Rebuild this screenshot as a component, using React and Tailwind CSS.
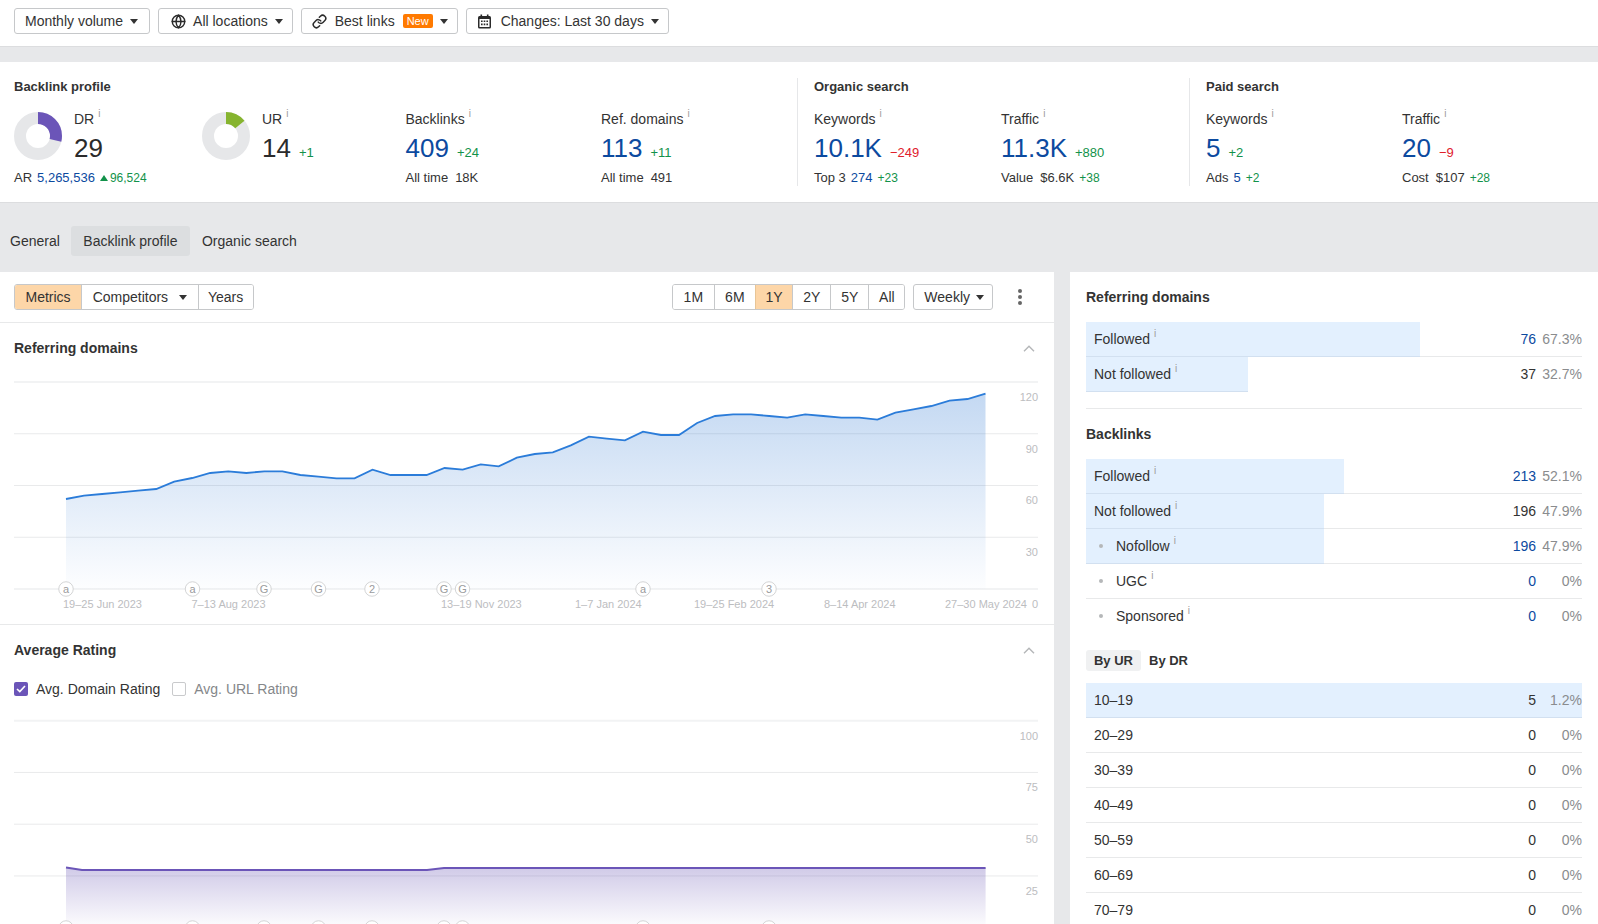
import { Globe, Link } from 'lucide-react';

const refY = [687, 677, 672, 667, 662, 657, 635, 624, 609, 604, 609, 604, 604, 615, 620, 625, 625, 599, 615, 615, 615, 594, 599, 583, 589, 563, 552, 547, 526, 500, 506, 511, 485, 495, 495, 459, 438, 433, 433, 438, 443, 433, 438, 443, 443, 449, 428, 418, 408, 392, 387, 371];
const refPoints = refY.map((z, i) => [66 + i * 18.03, 270 + z / 3]);
const toLine = (pts) => pts.map(([x, y]) => `${x.toFixed(1)},${y.toFixed(1)}`).join(' ');

const events = [
  [66, 'a'],
  [192.5, 'a'],
  [264, 'G'],
  [318.5, 'G'],
  [372, '2'],
  [444, 'G'],
  [462.5, 'G'],
  [643, 'a'],
  [769, '3'],
];

const xLabels = [
  [63, '19–25 Jun 2023'],
  [191.5, '7–13 Aug 2023'],
  [441, '13–19 Nov 2023'],
  [575, '1–7 Jan 2024'],
  [694, '19–25 Feb 2024'],
  [824, '8–14 Apr 2024'],
  [945, '27–30 May 2024'],
];

function Caret({ className = '' }) {
  return (
    <svg width="8" height="5" viewBox="0 0 8 5" className={`shrink-0 ${className}`}>
      <path d="M0 0h8L4 5z" fill="#333" />
    </svg>
  );
}

function Info() {
  return <span className="relative -top-[5px] ml-[4px] text-[10px] leading-none text-[#9c9c9c]">i</span>;
}

function TopButton({ icon, className = '', children }) {
  return (
    <button type="button" className={`flex h-[26px] items-center rounded-[3px] border border-[#c6c8ca] bg-white text-sm text-[#333] ${className}`}>
      {icon}
      <span>{children}</span>
      <Caret className="ml-[7px]" />
    </button>
  );
}

function CalendarIcon() {
  return (
    <svg width="15" height="15" viewBox="0 0 15 15" className="mr-[9px] shrink-0">
      <rect x="1" y="2" width="13" height="12.5" rx="1.5" fill="#2b2b2b" />
      <rect x="3.5" y="0.5" width="1.6" height="3" fill="#2b2b2b" />
      <rect x="9.9" y="0.5" width="1.6" height="3" fill="#2b2b2b" />
      <rect x="2.5" y="5" width="10" height="8" fill="#fff" />
      <path d="M4 6.5h1.6v1.6H4zM6.7 6.5h1.6v1.6H6.7zM9.4 6.5H11v1.6H9.4zM4 9.6h1.6v1.6H4zM6.7 9.6h1.6v1.6H6.7zM9.4 9.6H11v1.6H9.4z" fill="#2b2b2b" />
    </svg>
  );
}

function Donut({ percent, color }) {
  return (
    <svg width="48" height="48" viewBox="0 0 48 48" className="mt-[3px] shrink-0">
      <circle cx="24" cy="24" r="18" fill="none" stroke="#e6e7e9" strokeWidth="12" />
      <circle
        cx="24"
        cy="24"
        r="18"
        fill="none"
        stroke={color}
        strokeWidth="12"
        pathLength="100"
        strokeDasharray={`${percent} 100`}
        transform="rotate(-90 24 24)"
      />
    </svg>
  );
}

function Delta({ value, red, small }) {
  return <span className={`${small ? 'text-xs' : 'text-[13px]'} ${red ? 'text-[#e0202c]' : 'text-[#12924a]'}`}>{value}</span>;
}

function Metric({ label, value, delta, red, dark, className = '', children }) {
  return (
    <div className={className}>
      <div className="flex h-5 items-center text-sm text-[#333]">
        {label}
        <Info />
      </div>
      <div className="flex h-[38px] items-center gap-[8px]">
        <span className={`text-[26px] leading-none ${dark ? 'text-[#2b2b2b]' : 'text-[#0c4a9f]'}`}>{value}</span>
        {delta ? <span className="mt-[8px]"><Delta value={delta} red={red} /></span> : null}
      </div>
      <div className="mt-[1px] flex h-5 items-center gap-[5px] whitespace-nowrap text-[13px] text-[#333]">{children}</div>
    </div>
  );
}

function Blue({ children }) {
  return <span className="text-[#0c4a9f]">{children}</span>;
}

function SummaryCard() {
  return (
    <div className="flex h-[141px] border-b border-[#dcdddf] bg-white py-4">
      <section className="h-[108px] w-[797px] pl-[14px]">
        <h3 className="h-[18px] text-[13px] font-bold leading-[18px] text-[#333]">Backlink profile</h3>
        <div className="mt-[13px] flex">
          <div className="w-[188px]">
            <div className="flex">
              <Donut percent={29} color="#6b55b8" />
              <Metric label="DR" value="29" dark className="ml-[12px]" />
            </div>
            <div className="-mt-[20px] flex h-5 items-center gap-[5px] text-[13px] text-[#333]">
              AR <Blue>5,265,536</Blue>
              <span className="flex items-center gap-[2px] text-xs text-[#12924a]">
                <svg width="8" height="6" viewBox="0 0 8 6"><path d="M4 0l4 6H0z" fill="#12924a" /></svg>
                96,524
              </span>
            </div>
          </div>
          <div className="flex w-[203.5px]">
            <Donut percent={14} color="#86b42f" />
            <Metric label="UR" value="14" delta="+1" dark className="ml-[12px]" />
          </div>
          <Metric label="Backlinks" value="409" delta="+24" className="w-[195.5px]">
            All time <span className="ml-[2px]">18K</span>
          </Metric>
          <Metric label="Ref. domains" value="113" delta="+11">
            All time <span className="ml-[2px]">491</span>
          </Metric>
        </div>
      </section>
      <section className="h-[108px] w-[392px] border-l border-[#e6e7e9] pl-4">
        <h3 className="h-[18px] text-[13px] font-bold leading-[18px] text-[#333]">Organic search</h3>
        <div className="mt-[13px] flex">
          <Metric label="Keywords" value="10.1K" delta="−249" red className="w-[187px]">
            Top 3 <Blue>274</Blue> <Delta value="+23" small />
          </Metric>
          <Metric label="Traffic" value="11.3K" delta="+880">
            Value <span className="ml-[2px]">$6.6K</span> <Delta value="+38" small />
          </Metric>
        </div>
      </section>
      <section className="h-[108px] flex-1 border-l border-[#e6e7e9] pl-4">
        <h3 className="h-[18px] text-[13px] font-bold leading-[18px] text-[#333]">Paid search</h3>
        <div className="mt-[13px] flex">
          <Metric label="Keywords" value="5" delta="+2" className="w-[196px]">
            Ads <Blue>5</Blue> <Delta value="+2" small />
          </Metric>
          <Metric label="Traffic" value="20" delta="−9" red>
            Cost <span className="ml-[2px]">$107</span> <Delta value="+28" small />
          </Metric>
        </div>
      </section>
    </div>
  );
}

function Tabs() {
  return (
    <div className="flex h-[69px] items-start pl-[10px] pt-[23px] text-sm text-[#333]">
      <button type="button" className="h-[30px] pr-[11px]">General</button>
      <button type="button" className="h-[30px] rounded-[3px] bg-[#dcdee0] px-[12.5px]">Backlink profile</button>
      <button type="button" className="h-[30px] px-3">Organic search</button>
    </div>
  );
}

function Segment({ active, className = 'px-[10.5px]', children }) {
  return (
    <button
      type="button"
      className={`flex h-full items-center justify-center gap-[11px] border-l first:border-l-0 ${active ? 'border-[#e8c596] bg-[#fdd6a8]' : 'border-[#c6c8ca] bg-white'} ${className}`}
    >
      {children}
    </button>
  );
}

function Toolbar() {
  return (
    <div className="flex h-[51px] items-center border-b border-[#e8e9ea] pl-[14px] pr-[27px] text-sm text-[#333]">
      <div className="flex h-[26px] overflow-hidden rounded-[3px] border border-[#c6c8ca]">
        <Segment active>Metrics</Segment>
        <Segment>
          Competitors
          <Caret />
        </Segment>
        <Segment className="w-[55px]">Years</Segment>
      </div>
      <div className="ml-auto flex h-[26px] overflow-hidden rounded-[3px] border border-[#c6c8ca]">
        <Segment className="w-[41px]">1M</Segment>
        <Segment className="w-[41px]">6M</Segment>
        <Segment active className="w-[37.5px]">1Y</Segment>
        <Segment className="w-[38px]">2Y</Segment>
        <Segment className="w-[38px]">5Y</Segment>
        <Segment className="w-[36px]">All</Segment>
      </div>
      <button type="button" className="ml-[8px] flex h-[26px] items-center gap-[6px] rounded-[3px] border border-[#c6c8ca] pl-[10px] pr-[8px]">
        Weekly
        <Caret />
      </button>
      <button type="button" className="ml-[20px] flex h-[26px] w-[14px] flex-col items-center justify-center gap-[2px]">
        <span className="size-[4px] rounded-full bg-[#666]" />
        <span className="size-[4px] rounded-full bg-[#666]" />
        <span className="size-[4px] rounded-full bg-[#666]" />
      </button>
    </div>
  );
}

function SectionHeader({ title }) {
  return (
    <div className="flex h-[50px] items-center justify-between pl-[14px] pr-[19px]">
      <h3 className="text-sm font-bold text-[#333]">{title}</h3>
      <svg width="12" height="7" viewBox="0 0 12 7">
        <path d="M1 6.2L6 1.2l5 5" fill="none" stroke="#b4b6b8" strokeWidth="1.4" />
      </svg>
    </div>
  );
}

function GridLines({ top }) {
  return [0, 1, 2, 3, 4].map((i) => (
    <line
      key={i}
      x1="14"
      x2="1038"
      y1={top + i * 51.75}
      y2={top + i * 51.75}
      stroke={i === 0 || i === 4 ? '#f2f3f4' : '#e9eaeb'}
      strokeWidth={i === 0 || i === 4 ? 2 : 1}
    />
  ));
}

function AxisLabels({ top, labels }) {
  return labels.map((label, i) => (
    <text key={label} x="1038" y={top + 19 + i * 51.6} textAnchor="end" fontSize="11" fill="#bcbdbf">
      {label}
    </text>
  ));
}

function ReferringChart() {
  const line = toLine(refPoints);
  return (
    <svg viewBox="0 373 1054 251" className="block h-[251px] w-[1054px] font-['Liberation_Sans',Arial,sans-serif]">
      <defs>
        <linearGradient id="refFill" gradientUnits="userSpaceOnUse" x1="0" x2="0" y1="394" y2="589">
          <stop offset="0" stopColor="#2471d0" stopOpacity="0.27" />
          <stop offset="1" stopColor="#2471d0" stopOpacity="0.01" />
        </linearGradient>
      </defs>
      <GridLines top={382} />
      <polygon points={`66,589 ${line} 985.6,589`} fill="url(#refFill)" />
      <polyline points={line} fill="none" stroke="#2b7cd9" strokeWidth="1.8" />
      <AxisLabels top={382} labels={['120', '90', '60', '30']} />
      {events.map(([x, mark], i) => (
        <g key={i}>
          <circle cx={x} cy="589" r="7.25" fill="#fff" stroke="#d4d5d6" />
          <text x={x} y="592.8" textAnchor="middle" fontSize="11" fill="#9a9b9d">
            {mark}
          </text>
        </g>
      ))}
      {xLabels.map(([x, label]) => (
        <text key={label} x={x} y="608" fontSize="11" fill="#bcbdbf">
          {label}
        </text>
      ))}
      <text x="1038" y="608" textAnchor="end" fontSize="11" fill="#bcbdbf">0</text>
    </svg>
  );
}

function RatingChart() {
  const line = '66,867.4 82,870 427,870 444,868 985.6,868';
  return (
    <svg viewBox="0 710 1054 230" className="block h-[230px] w-[1054px] font-['Liberation_Sans',Arial,sans-serif]">
      <defs>
        <linearGradient id="ratingFill" gradientUnits="userSpaceOnUse" x1="0" x2="0" y1="868" y2="928">
          <stop offset="0" stopColor="#5a45ad" stopOpacity="0.28" />
          <stop offset="1" stopColor="#5a45ad" stopOpacity="0.01" />
        </linearGradient>
      </defs>
      <GridLines top={720.7} />
      <polygon points={`66,928 ${line} 985.6,928`} fill="url(#ratingFill)" />
      <polyline points={line} fill="none" stroke="#6b55b8" strokeWidth="2" />
      <AxisLabels top={720.7} labels={['100', '75', '50', '25']} />
      {events.map(([x], i) => (
        <circle key={i} cx={x} cy="928" r="7.25" fill="#fff" stroke="#d4d5d6" />
      ))}
    </svg>
  );
}

function LeftPanel() {
  return (
    <div className="w-[1054px] shrink-0 bg-white">
      <Toolbar />
      <SectionHeader title="Referring domains" />
      <ReferringChart />
      <div className="border-t border-[#e8e9ea]">
        <SectionHeader title="Average Rating" />
        <div className="mt-[4px] flex h-5 items-center pl-[14px] text-sm">
          <span className="flex size-[14px] items-center justify-center rounded-[2px] bg-[#6b55b8]">
            <svg width="10" height="8" viewBox="0 0 10 8">
              <path d="M1 4l2.8 2.6L9 1" fill="none" stroke="#fff" strokeWidth="1.6" />
            </svg>
          </span>
          <span className="ml-[8px] text-[#333]">Avg. Domain Rating</span>
          <span className="ml-[12px] size-[14px] rounded-[2px] border border-[#c9cacc]" />
          <span className="ml-[8px] text-[#85878a]">Avg. URL Rating</span>
        </div>
        <div className="mt-[11px]">
          <RatingChart />
        </div>
      </div>
    </div>
  );
}

function StatRow({ label, value, pct, bar, info, nested, link }) {
  return (
    <div className="relative flex h-[35px] items-center border-b border-[#e8e9ea] pl-2 text-sm text-[#333] last:border-b-transparent">
      {bar ? (
        <div className="absolute left-0 top-0 h-[35px] border-b border-[#d2e0f0] bg-[#e3f0fe]" style={{ width: `${bar}%` }} />
      ) : null}
      <div className="relative flex items-center">
        {nested ? <span className="ml-[5px] mr-[13px] size-[4px] rounded-full bg-[#b5b7b9]" /> : null}
        {label}
        {info ? <Info /> : null}
      </div>
      <div className={`relative ml-auto ${link ? 'text-[#0c4a9f]' : ''}`}>{value}</div>
      <div className="relative w-[46px] text-right text-[#8a8c8e]">{pct}</div>
    </div>
  );
}

const urRows = [
  ['20–29', 0],
  ['30–39', 0],
  ['40–49', 0],
  ['50–59', 0],
  ['60–69', 0],
  ['70–79', 0],
];

function RightPanel() {
  return (
    <div className="flex-1 bg-white px-4 pt-[14px]">
      <h3 className="h-[22px] text-sm font-bold leading-[22px] text-[#333]">Referring domains</h3>
      <div className="mt-[14px]">
        <StatRow label="Followed" info value="76" pct="67.3%" bar={67.3} link />
        <StatRow label="Not followed" info value="37" pct="32.7%" bar={32.7} />
      </div>
      <div className="mt-4 border-t border-[#e8e9ea] pt-[14px]">
        <h3 className="h-[22px] text-sm font-bold leading-[22px] text-[#333]">Backlinks</h3>
      </div>
      <div className="mt-[14px]">
        <StatRow label="Followed" info value="213" pct="52.1%" bar={52.1} link />
        <StatRow label="Not followed" info value="196" pct="47.9%" bar={47.9} />
        <StatRow label="Nofollow" info nested value="196" pct="47.9%" bar={47.9} link />
        <StatRow label="UGC" info nested value="0" pct="0%" link />
        <StatRow label="Sponsored" info nested value="0" pct="0%" link />
      </div>
      <div className="mt-4 flex h-[21px] items-center text-[13px] font-bold text-[#333]">
        <button type="button" className="h-[21px] w-[55px] rounded-[3px] bg-[#f0f1f2]">By UR</button>
        <button type="button" className="ml-2 h-[21px]">By DR</button>
      </div>
      <div className="mt-3">
        <StatRow label="10–19" value="5" pct="1.2%" bar={100} />
        {urRows.map(([label, value]) => (
          <StatRow key={label} label={label} value={value} pct="0%" />
        ))}
      </div>
    </div>
  );
}

export default function App() {
  return (
    <div className="h-[924px] overflow-hidden bg-[#e7e8ea] font-['Liberation_Sans',Arial,sans-serif]">
      <div className="flex h-[47px] gap-[8px] border-b border-[#dcdddf] bg-white pl-[14px] pt-2">
        <TopButton className="pl-[10px] pr-[11px]">Monthly volume</TopButton>
        <TopButton className="pl-[12px] pr-[9px]" icon={<Globe size={15} strokeWidth={2.3} className="mr-[7px] shrink-0 text-[#2b2b2b]" />}>All locations</TopButton>
        <button type="button" className="flex h-[26px] items-center rounded-[3px] border border-[#c6c8ca] bg-white pl-[10px] pr-[9px] text-sm text-[#333]">
          <Link size={15} strokeWidth={2.4} className="mr-[8px] shrink-0 text-[#2b2b2b]" />
          <span>Best links</span>
          <span className="ml-[8px] rounded-[2px] bg-[#ff7a00] px-[4px] text-[11px] leading-[14px] text-white">New</span>
          <Caret className="ml-[7px]" />
        </button>
        <TopButton className="pl-[10px] pr-[9px]" icon={<CalendarIcon />}>Changes: Last 30 days</TopButton>
      </div>
      <div className="h-[15px]" />
      <SummaryCard />
      <Tabs />
      <div className="flex gap-4">
        <LeftPanel />
        <RightPanel />
      </div>
    </div>
  );
}
